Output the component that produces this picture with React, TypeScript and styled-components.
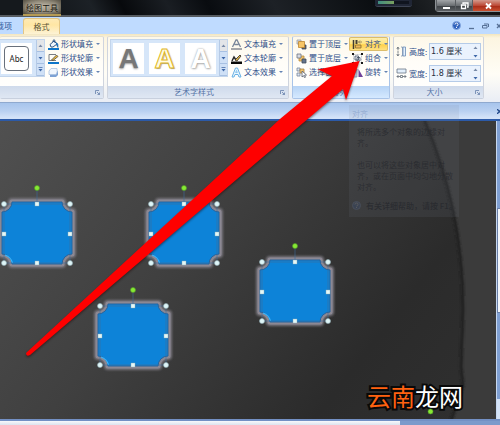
import React from "react";
import styled, { createGlobalStyle, css } from "styled-components";

const font = '"Noto Sans CJK SC", sans-serif';

const GlobalStyle = createGlobalStyle`
  *, *::before, *::after { box-sizing: border-box; }
  body { margin: 0; background: #333; font-family: ${font}; font-size: 8px; line-height: 12px; }
  button, input { font: inherit; color: inherit; border: 0; padding: 0; margin: 0; background: none; border-radius: 0; }
  svg { display: block; flex: none; }
`;

const Page = styled.div`
  position: relative;
  display: flex;
  flex-direction: column;
  min-height: 100vh;
  overflow: hidden;
  color: #2f4f8a;
`;

/* ---------- title bar ---------- */
const TitleBar = styled.header`
  display: flex;
  align-items: flex-start;
  height: 17px;
  padding-left: 23px;
  background: linear-gradient(62deg, #15191d 0 12%, #1c2126 19%, #07090c 25%, #1a1e23 34%, #090c10 42%, #1d2126 55%, #0a0d10 76%, #202326 88%, #111 100%);
  border-bottom: 2px solid #565b60;
`;

const ContextTitle = styled.div`
  width: 38px;
  height: 16px;
  line-height: 15px;
  text-align: center;
  color: #16130c;
  background: radial-gradient(ellipse at 50% 45%, #b5ae9e 0, #8e8777 50%, #4a4539 100%);
  border-bottom: 2px solid #b59a53;
  text-shadow: 0 0 3px #ddd6c4;
`;

const Spacer = styled.div`
  flex: 1;
`;

const Gadget = styled.div`
  width: 37px;
  height: 7px;
  margin-right: 23px;
  padding: 1px 3px;
  border-radius: 0 0 3px 3px;
  background: #202635;
  border-bottom: 1px solid #3d4454;
`;

const GadgetMeter = styled.div`
  height: 3px;
  background: linear-gradient(90deg, #3f8d83 0, #78a060 50%, #10151f 53%);
`;

const WindowButtons = styled.div`
  display: flex;
  height: 12px;
  margin-right: -5px;
  border: 1px solid #8d9296;
  border-top: 0;
  border-radius: 0 0 0 4px;
`;

const WindowButton = styled.button<{ $close?: boolean }>`
  display: flex;
  align-items: center;
  justify-content: center;
  width: ${(p) => (p.$close ? 32 : 17)}px;
  border-left: 1px solid #5a5e62;
  background: ${(p) =>
    p.$close
      ? "linear-gradient(#d39a8c, #bd4a36 50%, #a72c18 55%, #c9502f)"
      : "linear-gradient(#a2a5a8, #6b6f73 50%, #3e4246 55%, #5b5f63)"};
  &:first-child { width: 19px; }
`;

/* ---------- tab strip ---------- */
const TabStrip = styled.nav`
  display: flex;
  align-items: flex-end;
  height: 17px;
  background: #bfdbff;
`;

const Tab = styled.button<{ $active?: boolean }>`
  display: flex;
  justify-content: ${(p) => (p.$active ? "center" : "flex-end")};
  white-space: nowrap;
  width: ${(p) => (p.$active ? 37 : 12)}px;
  height: 16px;
  line-height: 15px;
  color: #2c5396;
  ${(p) =>
    p.$active &&
    css`
      margin-left: 11px;
      color: #5b5334;
      background: linear-gradient(#fde9b5, #ffe6a4 40%, #fdf3d5);
      border: 1px solid #e3c685;
      border-bottom: 0;
      border-radius: 3px 3px 0 0;
    `}
`;

const DocButtons = styled.div`
  display: flex;
  align-items: center;
  align-self: center;
  gap: 7px;
  margin-right: -3px;
`;

/* ---------- ribbon ---------- */
const Ribbon = styled.section`
  display: flex;
  gap: 3px;
  height: 69px;
  padding: 2px 0 3px;
  background: linear-gradient(#f3e6bf 0, #fcf5e1 4px, #fffdf6 40px, #e9edf5);
  border-bottom: 1px solid #8fa9cf;
`;

const Group = styled.section<{ $width: number; $hot?: boolean; $cut?: boolean }>`
  display: flex;
  flex-direction: column;
  flex: none;
  width: ${(p) => p.$width}px;
  background: linear-gradient(#fdf8e9, #fffdf8 25px, #fff);
  border: 1px solid #dcdad4;
  border-color: ${(p) => (p.$hot ? "#d9dbe0 #a9c4e8 #a9c4e8" : "#e6e0cf #cfd4de #c8d0de")};
  border-left-width: ${(p) => (p.$cut ? 0 : 1)}px;
  border-radius: 2px;
`;

const GroupBody = styled.div`
  display: flex;
  flex: 1;
  min-height: 0;
`;

const GroupTitle = styled.footer<{ $hot?: boolean }>`
  display: flex;
  align-items: center;
  justify-content: center;
  height: 12px;
  padding-right: 3px;
  color: #5472a6;
  background: ${(p) => (p.$hot ? "linear-gradient(#b6d3f5, #d5e9ff)" : "linear-gradient(#cfdaeb, #dfe7f3)")};
  h2 { flex: 1; margin: 0; font: inherit; text-align: center; }
`;

const Column = styled.div`
  display: flex;
  flex-direction: column;
`;

const Command = styled.button<{ $active?: boolean; $width: number }>`
  display: flex;
  align-items: center;
  gap: 2px;
  width: ${(p) => p.$width}px;
  height: 14px;
  padding-left: 3px;
  white-space: nowrap;
  line-height: 14px;
  ${(p) =>
    p.$active &&
    css`
      background: linear-gradient(#fdf0b8, #ffe37c 50%, #ffd04a 55%, #ffe58c);
      box-shadow: inset 0 0 0 1px #dcbd6b;
      border-radius: 2px;
    `}
`;

const Caret = styled.span`
  width: 0;
  height: 0;
  margin-left: 1px;
  border: 2px solid transparent;
  border-top-color: #6583b3;
  border-bottom: 0;
`;

const Gallery = styled.div<{ $cut?: boolean }>`
  display: flex;
  height: 38px;
  margin: 2px 0 0 ${(p) => (p.$cut ? 0 : 2)}px;
  background: #d6e6f9;
  border: 1px solid #c3d5ec;
  border-left-width: ${(p) => (p.$cut ? 0 : 1)}px;
`;

const Swatches = styled.div<{ $cut?: boolean }>`
  display: flex;
  align-items: center;
  gap: 5px;
  padding: ${(p) => (p.$cut ? "0 4px 0 1px" : "0 3px 0 2px")};
`;

const Swatch = styled.button`
  display: flex;
  align-items: center;
  justify-content: center;
  width: 31px;
  height: 31px;
  background: #fff;
`;

const Pill = styled.span`
  width: 25px;
  height: 25px;
  border: 1px solid #68707c;
  border-radius: 4px;
  color: #222;
  font: 8px/23px "Noto Sans", sans-serif;
  text-align: center;
`;

const WordArt = styled.span<{ $kind: number }>`
  font: bold 28px/31px "Liberation Sans", sans-serif;
  ${(p) => p.$kind === 0 && css`color: #777; text-shadow: 0 1px 2px #999;`}
  ${(p) => p.$kind === 1 && css`color: #fffbe5; -webkit-text-stroke: 1px #e1b91e; text-shadow: 1px 1px 1px #999;`}
  ${(p) => p.$kind === 2 && css`color: #fff; text-shadow: 0 0 2px #999, 1px 1px 2px #bbb;`}
`;

const Scroller = styled.div`
  display: flex;
  flex-direction: column;
  width: 8px;
  border-left: 1px solid #b5cae6;
  button {
    display: flex;
    flex: 1;
    align-items: center;
    justify-content: center;
    background: #cfe0f6;
    border-bottom: 1px solid #a7c0e2;
  }
  button:first-child { background: #e3e5e8; }
`;

const SizeFields = styled.div`
  display: flex;
  flex-direction: column;
  gap: 5px;
  padding: 6px 0 0 2px;
`;

const SizeField = styled.div`
  display: flex;
  align-items: center;
  height: 17px;
  label { width: 20px; margin-left: 2px; white-space: nowrap; }
`;

const Spin = styled.div`
  display: flex;
  width: 52px;
  height: 17px;
  background: #eaf2fd;
  border: 1px solid #b5cbe8;
  input { flex: 1; min-width: 0; padding-left: 1px; color: #27303f; font: 8px/15px "DejaVu Sans", ${font}; }
`;

const SpinButtons = styled.div`
  display: flex;
  flex-direction: column;
  width: 10px;
  button { display: flex; flex: 1; align-items: center; justify-content: center; }
`;

/* ---------- document ---------- */
const DocumentBar = styled.div`
  display: flex;
  align-items: center;
  justify-content: flex-end;
  height: 18px;
  background: linear-gradient(#a7c4ec 0, #b9d0f1 50%, #d3e2f8 90%);
  border-bottom: 2px solid #2c5aa8;
  button { width: 3px; overflow: hidden; }
`;

const Workspace = styled.main`
  display: flex;
  flex: 1;
  min-height: 298px;
`;

const Slide = styled.div`
  position: relative;
  flex: 1;
  overflow: hidden;
  background: linear-gradient(128deg, #505050 0, #404040 38%, #2b2b2b 75%, #303030 100%);
`;

const Placed = styled.div<{ $x: number; $y: number }>`
  position: absolute;
  left: ${(p) => p.$x}px;
  top: ${(p) => p.$y}px;
`;

const Backdrop = styled.svg`
  position: absolute;
  inset: 0;
`;

const VerticalScroll = styled.div`
  display: flex;
  flex-direction: column;
  width: 4px;
  background: #7f9fd2;
  border-left: 1px solid #c7d8f0;
`;

const VerticalThumb = styled.div`
  height: 105px;
  margin: 87px 0 auto;
  background: #f1f4fa;
  border: 1px solid #6a7fa8;
  border-right: 0;
`;

const SlideButtons = styled.div`
  height: 20px;
  background: #d5e3f7;
`;

const HorizontalScroll = styled.div`
  display: flex;
  height: 6px;
  border-top: 2px solid #7390c4;
  background: #7c9acb;
`;

const HorizontalThumb = styled.div`
  width: 80%;
  background: linear-gradient(#f8f9fc, #dce3ee);
`;

const Tooltip = styled.aside`
  position: absolute;
  left: 349px;
  top: 105px;
  width: 110px;
  height: 112px;
  padding: 3px;
  color: rgba(32, 34, 40, 0.6);
  background: rgba(125, 135, 145, 0.12);
  line-height: 11px;
  h3 { margin: 0; font-size: 8px; line-height: 12px; font-weight: 500; color: rgba(90, 120, 170, 0.3); }
  p { margin: 6px 0 0 5px; white-space: nowrap; }
  p + p { margin-top: 11px; }
`;

const TooltipHelp = styled.div`
  display: flex;
  align-items: center;
  gap: 5px;
  margin-top: 8px;
  font-weight: 500;
  white-space: nowrap;
`;

const ArrowLayer = styled.svg`
  position: absolute;
  left: 0;
  top: 0;
  pointer-events: none;
`;

const Watermark = styled.div`
  font: 400 24px/30px ${font};
  white-space: nowrap;
  color: #fff;
  -webkit-text-stroke: 4px #090909;
  paint-order: stroke fill;
  span { color: #ff6210; }
`;

type IconName =
  | "fill" | "outline" | "effect" | "textFill" | "textOutline" | "textEffect"
  | "front" | "back" | "pane" | "align" | "group" | "rotate" | "height" | "width";

const drawings: Record<IconName, React.ReactNode> = {
  fill: (
    <>
      <path d="M2 5.500 6 2l3 3-4 3H3z" fill="#eef5fc" stroke="#2c5688" />
      <path d="M5 3V1.500q1-1.500 2 0V4" fill="none" stroke="#2c5688" />
      <path d="M8.500 3.500q2 1 1.500 5-1.500-1-1.500-5" fill="#1f6fb8" stroke="#1f6fb8" strokeWidth=".6" />
      <path d="M0 9h11v2H0z" fill="#0d75c9" />
    </>
  ),
  outline: (
    <>
      <path d="M8 1.500H1v6h7" fill="none" stroke="#777d83" />
      <path d="m3.500 7 5-5L10 3.500 5 7.500z" fill="#efbd43" stroke="#3b3a36" strokeWidth=".7" />
      <path d="M0 9h11v2H0z" fill="#0d75c9" />
    </>
  ),
  effect: (
    <>
      <path d="M3 4h7v4L8 10H2V8z" fill="#7ea2d4" />
      <path d="M3 1.500h6q1 3-1 6H1q-1-4 2-6" fill="#f0f6fd" stroke="#a9c1e0" strokeWidth=".8" />
    </>
  ),
  textFill: (
    <>
      <path d="M1.500 8 5 1h1l3.500 7M3.500 5.500h4" fill="none" stroke="#79869a" strokeWidth="1.300" />
      <path d="M0 9h11v2H0z" fill="#a4a6aa" />
    </>
  ),
  textOutline: (
    <>
      <path d="m1 8 2-4 2 3" fill="none" stroke="#282828" strokeWidth="1.500" />
      <path d="m4 7 5-5 1 1-4 5z" fill="#dfb345" stroke="#292929" strokeWidth=".8" />
      <path d="M0 8.500h11V11H0z" fill="#080808" />
    </>
  ),
  textEffect: (
    <>
      <path d="m1 10 3.500-9h2L10 10H8L7 7.500H4L3 10z" fill="#e9f7ff" stroke="#69b1e5" />
      <path d="m4.600 5.500.9-2 .8 2z" fill="#fff" stroke="#69b1e5" strokeWidth=".7" />
    </>
  ),
  front: (
    <>
      <path d="M1 1h4v4H1z" fill="#d9dbdf" stroke="#9a9ea6" strokeWidth=".8" />
      <path d="M6 6h4v4H6z" fill="#58616f" stroke="#414b5c" strokeWidth=".8" />
      <path d="M2.500 2.500h6v6h-6z" fill="#f7c566" stroke="#bd8530" strokeWidth=".8" />
    </>
  ),
  back: (
    <>
      <path d="M3 3h5v5H3z" fill="#f2c267" stroke="#b68a3c" strokeWidth=".8" />
      <path d="M1 1h4v4H1z" fill="#d8dbe2" stroke="#6d7583" strokeWidth=".8" />
      <path d="M6 6h4v4H6z" fill="#65748c" stroke="#414b5c" strokeWidth=".8" />
    </>
  ),
  pane: (
    <>
      <path d="M1 1h3v3H1zM1 6h3v3H1z" fill="#dce5f1" stroke="#77859c" strokeWidth=".8" />
      <path d="M4 2h4v4H4z" fill="#f4c56c" stroke="#aa8043" strokeWidth=".8" />
      <path d="m6 4 4.500 4-2 .2 1 2-1 .5-1-2L6 10z" fill="#fff" stroke="#535e70" strokeWidth=".8" />
    </>
  ),
  align: (
    <>
      <path d="M1.500 1v9" stroke="#413b31" strokeWidth="1.500" />
      <path d="M3.500 1h2v4h-2z" fill="#474034" />
      <path d="M3.500 6H9v3H3.500z" fill="#efb95a" stroke="#866a31" strokeWidth=".8" />
      <path d="M10 3H6.500M8 1.500 6.500 3 8 4.500" fill="none" stroke="#847452" strokeWidth=".8" />
    </>
  ),
  group: (
    <>
      <path d="M1.500 1.500h8v8h-8z" fill="#fff" stroke="#9298a3" strokeWidth=".6" strokeDasharray="2 1" />
      <path d="M3 3h3.500v4H3zM5 4.500h3v3.500H5z" fill="#eef3fa" stroke="#3e4a5e" strokeWidth=".8" />
      <path d="M0 0h2v2H0zM9 0h2v2H9zM0 9h2v2H0zM9 9h2v2H9z" fill="#171717" />
    </>
  ),
  rotate: (
    <>
      <path d="M5 10V2L1 10z" fill="#ccd9ee" stroke="#6e83a8" strokeWidth=".7" />
      <path d="M6.500 10V2L11 10z" fill="#71429a" />
    </>
  ),
  height: (
    <>
      <path d="M2 1v9M.8 3 2 1l1.200 2M.8 8 2 10l1.200-2" fill="none" stroke="#4c5663" strokeWidth=".7" strokeDasharray="3 .6" />
      <path d="M5 1h1.500v9H5" fill="none" stroke="#7f93ad" strokeWidth=".8" />
      <path d="M7 1h2.500v9H7z" fill="#e3effc" stroke="#6a8bb5" strokeWidth=".8" />
    </>
  ),
  width: (
    <>
      <path d="M1 1h9v4H1z" fill="#e3effc" stroke="#6b7785" strokeWidth=".8" />
      <path d="M1 8.500h3M7 8.500h3M2.500 7 1 8.500 2.500 10M8.500 7 10 8.500 8.500 10M4.500 7.500h2v2h-2z" fill="none" stroke="#4c5663" strokeWidth=".7" />
    </>
  ),
};

const Icon = ({ name }: { name: IconName }) => (
  <svg width="11" height="11" viewBox="0 0 11 11" aria-hidden="true">{drawings[name]}</svg>
);

const Launcher = () => (
  <button aria-label="更多选项">
    <svg width="5" height="5" viewBox="0 0 5 5">
      <path d="M.5 4V.5H4M2 2l2.500 2.500M4.500 2.500v2h-2" fill="none" stroke="#6680ab" strokeWidth=".8" />
    </svg>
  </button>
);

const Triangle = ({ up, bar }: { up?: boolean; bar?: boolean }) => (
  <svg width="5" height="5" viewBox="0 0 5 5">
    {bar && <path d="M.5.500h4" stroke="#496da7" strokeWidth=".8" />}
    <path d={up ? "M.5 4h4l-2-2.500z" : "M.5 2h4l-2 2.500z"} fill={up ? "#7789a6" : "#3e67a8"} />
  </svg>
);

const GalleryScroller = () => (
  <Scroller>
    <button aria-label="上一行"><Triangle up /></button>
    <button aria-label="下一行"><Triangle /></button>
    <button aria-label="其他"><Triangle bar /></button>
  </Scroller>
);

type Item = { icon: IconName; text: string; active?: boolean; plain?: boolean };

const Commands = ({ items, width }: { items: Item[]; width: number }) => (
  <Column>
    {items.map((item) => (
      <Command key={item.text} $active={item.active} $width={width}>
        <Icon name={item.icon} />
        {item.text}
        {!item.plain && <Caret />}
      </Command>
    ))}
  </Column>
);

const Measure = ({ id, label, icon, value }: { id: string; label: string; icon: IconName; value: string }) => (
  <SizeField>
    <Icon name={icon} />
    <label htmlFor={id}>{label}</label>
    <Spin>
      <input id={id} defaultValue={value} />
      <SpinButtons>
        <button aria-label={`增加${label}`}><Triangle up /></button>
        <button aria-label={`减少${label}`}><Triangle /></button>
      </SpinButtons>
    </Spin>
  </SizeField>
);

const HelpIcon = ({ faded }: { faded?: boolean }) => (
  <svg width="9" height="9" viewBox="0 0 9 9" opacity={faded ? 0.15 : 1} aria-hidden="true">
    <circle cx="4.500" cy="4.500" r="4" fill="#2f62bd" stroke="#87a8df" />
    <path d="M3 3.500q0-1.500 1.500-1.500T6 3.500 4.500 5M4.500 6v1" fill="none" stroke="#fff" />
  </svg>
);

const plaque = "M17 22H67A10 10 0 0 0 77 32V74A10 10 0 0 0 67 84H17A10 10 0 0 0 7 74V32A10 10 0 0 0 17 22Z";

const Plaque = () => (
  <svg width="84" height="94" viewBox="0 0 84 94">
    <path d={plaque} fill="none" stroke="#77747c" strokeWidth="8" strokeLinejoin="round" filter="url(#soften)" />
    <path d={plaque} fill="none" stroke="#8c8893" strokeWidth="5" strokeLinejoin="round" />
    <path d={plaque} fill="#0d83d8" stroke="#28649d" strokeWidth="1" />
    <path d="M10 75q6 2 7.500 8" fill="none" stroke="#35b6ff" strokeWidth="1.200" />
    <path d="M42 10v13M9 24h66v59H9z" fill="none" stroke="#3d6c9c" strokeWidth=".6" />
    {[24, 83].map((y) => [9, 75].map((x) => (
      <circle key={`${x}-${y}`} cx={x} cy={y} r="2.500" fill="#dff5f7" stroke="#8eabb4" strokeWidth=".6" />
    )))}
    {[[42, 24], [9, 54], [75, 54], [42, 83]].map(([x, y]) => (
      <rect key={`${x}-${y}`} x={x - 2} y={y - 2} width="4" height="4" fill="#e4f8f8" stroke="#8eabb4" strokeWidth=".4" />
    ))}
    <circle cx="42" cy="8" r="2.500" fill="#87e934" stroke="#4f9b25" strokeWidth=".6" />
  </svg>
);

const plaques = [
  { x: -5, y: 59 },
  { x: 142, y: 59 },
  { x: 91, y: 161 },
  { x: 253, y: 117 },
];

export default function App() {
  return (
    <Page>
      <GlobalStyle />
      <TitleBar>
        <ContextTitle>绘图工具</ContextTitle>
        <Spacer />
        <Gadget><GadgetMeter /></Gadget>
        <WindowButtons>
          <WindowButton aria-label="最小化">
            <svg width="9" height="8"><path d="M1 5h7v2H1z" fill="#fff" /></svg>
          </WindowButton>
          <WindowButton aria-label="还原">
            <svg width="9" height="8"><path d="M3 2V1h5v4H7M1.500 3h4v3.500h-4z" fill="none" stroke="#fff" strokeWidth="1.300" /></svg>
          </WindowButton>
          <WindowButton $close aria-label="关闭">
            <svg width="9" height="8"><path d="m2 1.500 5 5m0-5-5 5" stroke="#fff" strokeWidth="1.800" /></svg>
          </WindowButton>
        </WindowButtons>
      </TitleBar>

      <TabStrip>
        <Tab>加载项</Tab>
        <Tab $active>格式</Tab>
        <Spacer />
        <DocButtons>
          <button aria-label="帮助"><HelpIcon /></button>
          <button aria-label="最小化文档"><svg width="7" height="8"><path d="M1 6.500h5" stroke="#567096" strokeWidth="1.300" /></svg></button>
          <button aria-label="还原文档"><svg width="7" height="8"><path d="M2 2h4.500v3M.5 3.500H5V6H.5z" fill="none" stroke="#567096" /></svg></button>
          <button aria-label="关闭文档"><svg width="7" height="8"><path d="m1 2 4 4m0-4L1 6" stroke="#567096" strokeWidth="1.300" /></svg></button>
        </DocButtons>
      </TabStrip>

      <Ribbon>
        <Group $width={104} $cut>
          <GroupBody>
            <Gallery $cut>
              <Swatches $cut><Swatch><Pill>Abc</Pill></Swatch></Swatches>
              <GalleryScroller />
            </Gallery>
            <Commands width={54} items={[
              { icon: "fill", text: "形状填充" },
              { icon: "outline", text: "形状轮廓" },
              { icon: "effect", text: "形状效果" },
            ]} />
          </GroupBody>
          <GroupTitle><Spacer /><Launcher /></GroupTitle>
        </Group>

        <Group $width={182}>
          <GroupBody>
            <Gallery>
              <Swatches>
                {[0, 1, 2].map((kind) => (
                  <Swatch key={kind} aria-label={`样式 ${kind + 1}`}><WordArt $kind={kind}>A</WordArt></Swatch>
                ))}
              </Swatches>
              <GalleryScroller />
            </Gallery>
            <Commands width={56} items={[
              { icon: "textFill", text: "文本填充" },
              { icon: "textOutline", text: "文本轮廓" },
              { icon: "textEffect", text: "文本效果" },
            ]} />
          </GroupBody>
          <GroupTitle><h2>艺术字样式</h2><Launcher /></GroupTitle>
        </Group>

        <Group $width={98} $hot>
          <GroupBody>
            <Commands width={56} items={[
              { icon: "front", text: "置于顶层" },
              { icon: "back", text: "置于底层" },
              { icon: "pane", text: "选择窗格", plain: true },
            ]} />
            <Commands width={39} items={[
              { icon: "align", text: "对齐", active: true },
              { icon: "group", text: "组合" },
              { icon: "rotate", text: "旋转" },
            ]} />
          </GroupBody>
          <GroupTitle $hot><h2>排列</h2></GroupTitle>
        </Group>

        <Group $width={91}>
          <SizeFields>
            <Measure id="shape-height" label="高度:" icon="height" value="1.6 厘米" />
            <Measure id="shape-width" label="宽度:" icon="width" value="1.8 厘米" />
          </SizeFields>
          <Spacer />
          <GroupTitle><h2>大小</h2><Launcher /></GroupTitle>
        </Group>
      </Ribbon>

      <DocumentBar>
        <button aria-label="关闭窗格">
          <svg width="5" height="5"><path d="m0 0 5 5m0-5L0 5" stroke="#244a8c" strokeWidth="1.300" /></svg>
        </button>
      </DocumentBar>

      <Workspace>
        <Slide>
          <Backdrop width="100%" height="100%" viewBox="0 0 496 298" preserveAspectRatio="none" aria-hidden="true">
            <defs>
              <filter id="soften"><feGaussianBlur stdDeviation="1.200" /></filter>
            </defs>
            <path d="M425 -2C449 55 464 115 464 189L462 246 464 264 452 300H500V-2Z" fill="#3b3b3b" />
            <path d="M424 -2C448 55 463 115 463 189L461 246 463 264 451 300" fill="none" stroke="#222" strokeWidth="3" filter="url(#soften)" />
          </Backdrop>
          {plaques.map((p) => (
            <Placed key={`${p.x}-${p.y}`} $x={p.x} $y={p.y}><Plaque /></Placed>
          ))}
          <Placed $x={367} $y={260}><Watermark><span>云南</span>龙网</Watermark></Placed>
          <Placed $x={427} $y={287}>
            <svg width="7" height="7"><circle cx="3.500" cy="3.500" r="2.500" fill="#87e934" stroke="#4f9b25" strokeWidth=".6" /></svg>
          </Placed>
        </Slide>
        <VerticalScroll><VerticalThumb /><SlideButtons /></VerticalScroll>
      </Workspace>
      <HorizontalScroll><HorizontalThumb /></HorizontalScroll>

      <Tooltip>
        <h3>对齐</h3>
        <p>将所选多个对象的边缘对<br />齐。</p>
        <p>也可以将这些对象居中对<br />齐，或在页面中均匀地分散<br />对齐。</p>
        <TooltipHelp><HelpIcon faded />有关详细帮助，请按 F1。</TooltipHelp>
      </Tooltip>

      <ArrowLayer width="370" height="365" aria-hidden="true">
        <path d="M359.500 61 318 69.500 332 76 280 119 26 353Q26 357 30 355L343 89 346 100Z" fill="#280000" opacity=".5" filter="url(#soften)" transform="translate(0 1.500)" />
        <path d="M359.500 61 318 69.500 332 76 280 119 26 353Q26 357 30 355L343 89 346 100Z" fill="#fe0000" />
      </ArrowLayer>
    </Page>
  );
}
